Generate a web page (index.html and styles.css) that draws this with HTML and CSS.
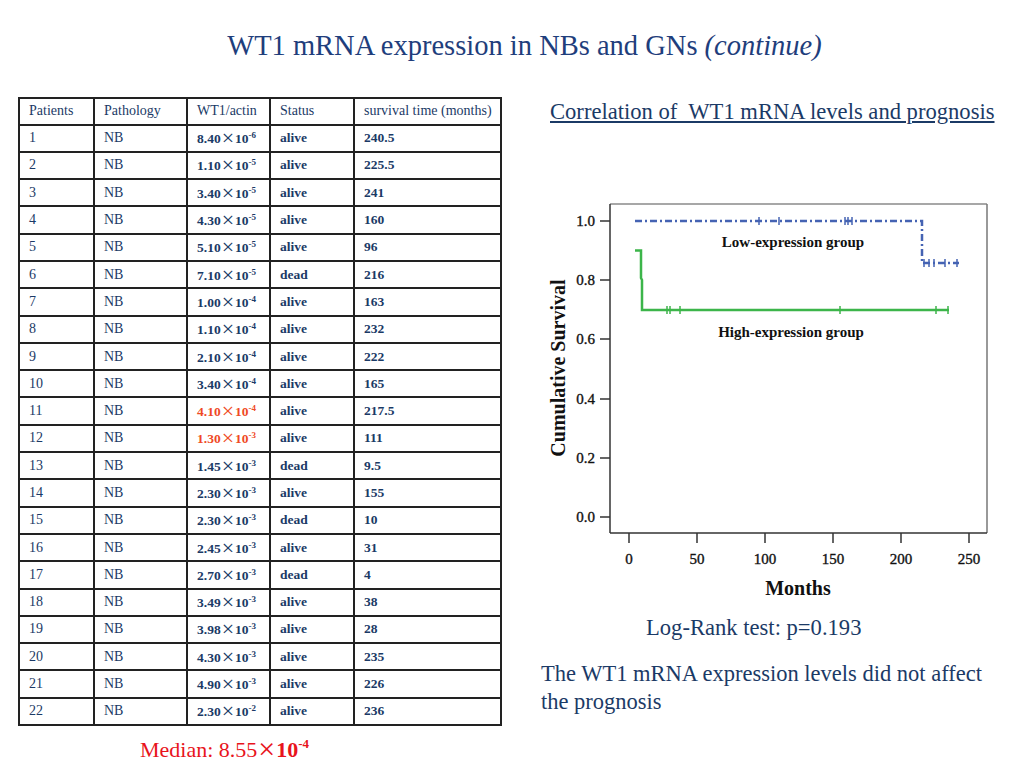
FILE: index.html
```html
<!DOCTYPE html>
<html>
<head>
<meta charset="utf-8">
<link rel="stylesheet" href="styles.css">
</head>
<body>
<h1 class="title">WT1 mRNA expression in NBs and GNs <em>(continue)</em></h1>
<div class="page">
  <div class="left">
    <table class="data">
      <tr class="head"><td>Patients</td><td>Pathology</td><td>WT1/actin</td><td>Status</td><td>survival time (months)</td></tr>
      <tr><td>1</td><td>NB</td><td class="b">8.40<span class="x">×</span>10<sup>-6</sup></td><td class="b">alive</td><td class="b">240.5</td></tr>
      <tr><td>2</td><td>NB</td><td class="b">1.10<span class="x">×</span>10<sup>-5</sup></td><td class="b">alive</td><td class="b">225.5</td></tr>
      <tr><td>3</td><td>NB</td><td class="b">3.40<span class="x">×</span>10<sup>-5</sup></td><td class="b">alive</td><td class="b">241</td></tr>
      <tr><td>4</td><td>NB</td><td class="b">4.30<span class="x">×</span>10<sup>-5</sup></td><td class="b">alive</td><td class="b">160</td></tr>
      <tr><td>5</td><td>NB</td><td class="b">5.10<span class="x">×</span>10<sup>-5</sup></td><td class="b">alive</td><td class="b">96</td></tr>
      <tr><td>6</td><td>NB</td><td class="b">7.10<span class="x">×</span>10<sup>-5</sup></td><td class="b">dead</td><td class="b">216</td></tr>
      <tr><td>7</td><td>NB</td><td class="b">1.00<span class="x">×</span>10<sup>-4</sup></td><td class="b">alive</td><td class="b">163</td></tr>
      <tr><td>8</td><td>NB</td><td class="b">1.10<span class="x">×</span>10<sup>-4</sup></td><td class="b">alive</td><td class="b">232</td></tr>
      <tr><td>9</td><td>NB</td><td class="b">2.10<span class="x">×</span>10<sup>-4</sup></td><td class="b">alive</td><td class="b">222</td></tr>
      <tr><td>10</td><td>NB</td><td class="b">3.40<span class="x">×</span>10<sup>-4</sup></td><td class="b">alive</td><td class="b">165</td></tr>
      <tr><td>11</td><td>NB</td><td class="b red">4.10<span class="x">×</span>10<sup>-4</sup></td><td class="b">alive</td><td class="b">217.5</td></tr>
      <tr><td>12</td><td>NB</td><td class="b red">1.30<span class="x">×</span>10<sup>-3</sup></td><td class="b">alive</td><td class="b">111</td></tr>
      <tr><td>13</td><td>NB</td><td class="b">1.45<span class="x">×</span>10<sup>-3</sup></td><td class="b">dead</td><td class="b">9.5</td></tr>
      <tr><td>14</td><td>NB</td><td class="b">2.30<span class="x">×</span>10<sup>-3</sup></td><td class="b">alive</td><td class="b">155</td></tr>
      <tr><td>15</td><td>NB</td><td class="b">2.30<span class="x">×</span>10<sup>-3</sup></td><td class="b">dead</td><td class="b">10</td></tr>
      <tr><td>16</td><td>NB</td><td class="b">2.45<span class="x">×</span>10<sup>-3</sup></td><td class="b">alive</td><td class="b">31</td></tr>
      <tr><td>17</td><td>NB</td><td class="b">2.70<span class="x">×</span>10<sup>-3</sup></td><td class="b">dead</td><td class="b">4</td></tr>
      <tr><td>18</td><td>NB</td><td class="b">3.49<span class="x">×</span>10<sup>-3</sup></td><td class="b">alive</td><td class="b">38</td></tr>
      <tr><td>19</td><td>NB</td><td class="b">3.98<span class="x">×</span>10<sup>-3</sup></td><td class="b">alive</td><td class="b">28</td></tr>
      <tr><td>20</td><td>NB</td><td class="b">4.30<span class="x">×</span>10<sup>-3</sup></td><td class="b">alive</td><td class="b">235</td></tr>
      <tr><td>21</td><td>NB</td><td class="b">4.90<span class="x">×</span>10<sup>-3</sup></td><td class="b">alive</td><td class="b">226</td></tr>
      <tr><td>22</td><td>NB</td><td class="b">2.30<span class="x">×</span>10<sup>-2</sup></td><td class="b">alive</td><td class="b">236</td></tr>
    </table>
    <p class="median">Median: 8.55<span class="mx">×</span><b>10<sup>-4</sup></b></p>
  </div>
  <div class="right">
    <p class="caption">Correlation of&nbsp; WT1 mRNA levels and prognosis</p>
    <svg class="chart" width="480" height="420" viewBox="0 0 480 420" xmlns="http://www.w3.org/2000/svg">
      <g class="frame">
        <line x1="78" y1="14" x2="455" y2="14" stroke="#8a8a8a" stroke-width="1.5"/>
        <line x1="455" y1="14" x2="455" y2="343" stroke="#777" stroke-width="1.5"/>
        <line x1="78" y1="14" x2="78" y2="343" stroke="#333" stroke-width="1.5"/>
        <line x1="78" y1="343" x2="455" y2="343" stroke="#333" stroke-width="1.5"/>
      </g>
      <g stroke="#333" stroke-width="1.5">
        <line x1="68" y1="31" x2="78" y2="31"/>
        <line x1="68" y1="90" x2="78" y2="90"/>
        <line x1="68" y1="149" x2="78" y2="149"/>
        <line x1="68" y1="209" x2="78" y2="209"/>
        <line x1="68" y1="268" x2="78" y2="268"/>
        <line x1="68" y1="327" x2="78" y2="327"/>
        <line x1="97" y1="343" x2="97" y2="353"/>
        <line x1="165" y1="343" x2="165" y2="353"/>
        <line x1="233" y1="343" x2="233" y2="353"/>
        <line x1="301" y1="343" x2="301" y2="353"/>
        <line x1="369" y1="343" x2="369" y2="353"/>
        <line x1="437" y1="343" x2="437" y2="353"/>
      </g>
      <g class="ticklbl" text-anchor="end">
        <text x="63" y="36">1.0</text>
        <text x="63" y="95">0.8</text>
        <text x="63" y="154">0.6</text>
        <text x="63" y="214">0.4</text>
        <text x="63" y="273">0.2</text>
        <text x="63" y="332">0.0</text>
      </g>
      <g class="ticklbl" text-anchor="middle">
        <text x="97" y="374">0</text>
        <text x="165" y="374">50</text>
        <text x="233" y="374">100</text>
        <text x="301" y="374">150</text>
        <text x="369" y="374">200</text>
        <text x="437" y="374">250</text>
      </g>
      <text class="axlbl" x="266" y="405" text-anchor="middle">Months</text>
      <text class="axlbl" x="0" y="0" text-anchor="middle" transform="translate(33 178) rotate(-90)">Cumulative Survival</text>
      <path d="M103 31 H390 V73 H427" fill="none" stroke="#4563b3" stroke-width="2.5" stroke-dasharray="7 3 2 3"/>
      <g stroke="#4563b3" stroke-width="1.5">
        <line x1="227" y1="27" x2="227" y2="35"/>
        <line x1="247" y1="27" x2="247" y2="35"/>
        <line x1="313" y1="27" x2="313" y2="35"/>
        <line x1="316" y1="27" x2="316" y2="35"/>
        <line x1="320" y1="27" x2="320" y2="35"/>
        <line x1="392" y1="69" x2="392" y2="77"/>
        <line x1="397" y1="69" x2="397" y2="77"/>
        <line x1="402" y1="69" x2="402" y2="77"/>
        <line x1="413" y1="69" x2="413" y2="77"/>
        <line x1="425" y1="69" x2="425" y2="77"/>
      </g>
      <path d="M103 60.5 H109 V88 L110 90 V120 H417" fill="none" stroke="#3cb54a" stroke-width="2.5"/>
      <g stroke="#3cb54a" stroke-width="1.5">
        <line x1="135" y1="116" x2="135" y2="124"/>
        <line x1="138" y1="116" x2="138" y2="124"/>
        <line x1="148" y1="116" x2="148" y2="124"/>
        <line x1="308" y1="116" x2="308" y2="124"/>
        <line x1="404" y1="116" x2="404" y2="124"/>
        <line x1="416" y1="116" x2="416" y2="124"/>
      </g>
      <text class="grp" x="261" y="57" text-anchor="middle">Low-expression group</text>
      <text class="grp" x="259" y="147" text-anchor="middle">High-expression group</text>
    </svg>
    <p class="logrank">Log-Rank test: p=0.193</p>
    <p class="concl">The WT1 mRNA expression levels did not affect the prognosis</p>
  </div>
</div>
</body>
</html>
```
FILE: styles.css
```css
html, body {
  margin: 0;
  padding: 0;
  background: #fff;
}
body {
  width: 1024px;
  height: 768px;
  overflow: hidden;
  font-family: "Liberation Serif", "Times New Roman", serif;
  color: #1b3a66;
}
.title {
  margin: 0;
  padding: 30px 0 0 25px;
  height: 67px;
  box-sizing: border-box;
  font-size: 28.5px;
  font-weight: normal;
  line-height: 32px;
  text-align: center;
  color: #1f3e7c;
}
.title em {
  font-style: italic;
}
.page {
  display: flex;
  align-items: flex-start;
  padding-top: 30px;
}
.left {
  width: 502px;
  padding-left: 18px;
  box-sizing: border-box;
}
.data {
  width: 484px;
  border-collapse: collapse;
  border: 2px solid #222;
  color: #1b3a66;
}
.data td {
  border: 2px solid #222;
  padding: 0 0 0 9px;
  font-size: 14px;
  line-height: 16px;
  height: 27.3px;
  box-sizing: border-box;
  white-space: nowrap;
  vertical-align: middle;
}
.data td:nth-child(1) { width: 75px; }
.data td:nth-child(2) { width: 93px; }
.data td:nth-child(3) { width: 83px; }
.data td:nth-child(4) { width: 84px; }
.data .head td {
  font-size: 14px;
  height: 26.5px;
}
.data td.b {
  font-weight: bold;
  font-size: 13.5px;
}
.data td.red {
  color: #ef4a25;
}
.data .x {
  font-family: "Liberation Serif", serif;
  font-weight: normal;
  font-size: 22px;
  line-height: 1;
  vertical-align: -2px;
  padding: 0 1px;
}
.data sup {
  font-size: 9px;
  vertical-align: 5px;
  line-height: 0;
}
.median {
  margin: 8px 0 0 122px;
  font-size: 22px;
  line-height: 24px;
  color: #e8141c;
}
.median .mx {
  font-size: 30px;
  line-height: 1;
  vertical-align: -2px;
  padding: 0 1px;
}
.median sup {
  font-size: 13px;
  vertical-align: 9px;
  line-height: 0;
}
.right {
  width: 490px;
  padding-left: 37px;
  box-sizing: border-box;
}
.caption {
  margin: 3px 0 0 11px;
  font-size: 22.6px;
  line-height: 24px;
  white-space: nowrap;
  text-decoration: underline;
  text-underline-offset: 2px;
  color: #1b3a66;
}
.chart {
  display: block;
  margin-top: 66px;
  margin-left: -7px;
}
.ticklbl text {
  font-family: "Liberation Serif", serif;
  font-size: 15px;
  fill: #111;
  stroke: #111;
  stroke-width: 0.35px;
}
.axlbl {
  font-family: "Liberation Serif", serif;
  font-size: 20px;
  font-weight: bold;
  fill: #111;
}
.grp {
  font-family: "Liberation Serif", serif;
  font-size: 15px;
  font-weight: bold;
  fill: #111;
}
.logrank {
  margin: 6px 0 0 107px;
  font-size: 22.6px;
  line-height: 24px;
}
.concl {
  margin: 20px 0 0 2px;
  font-size: 22.5px;
  line-height: 28px;
  width: 460px;
}
```
